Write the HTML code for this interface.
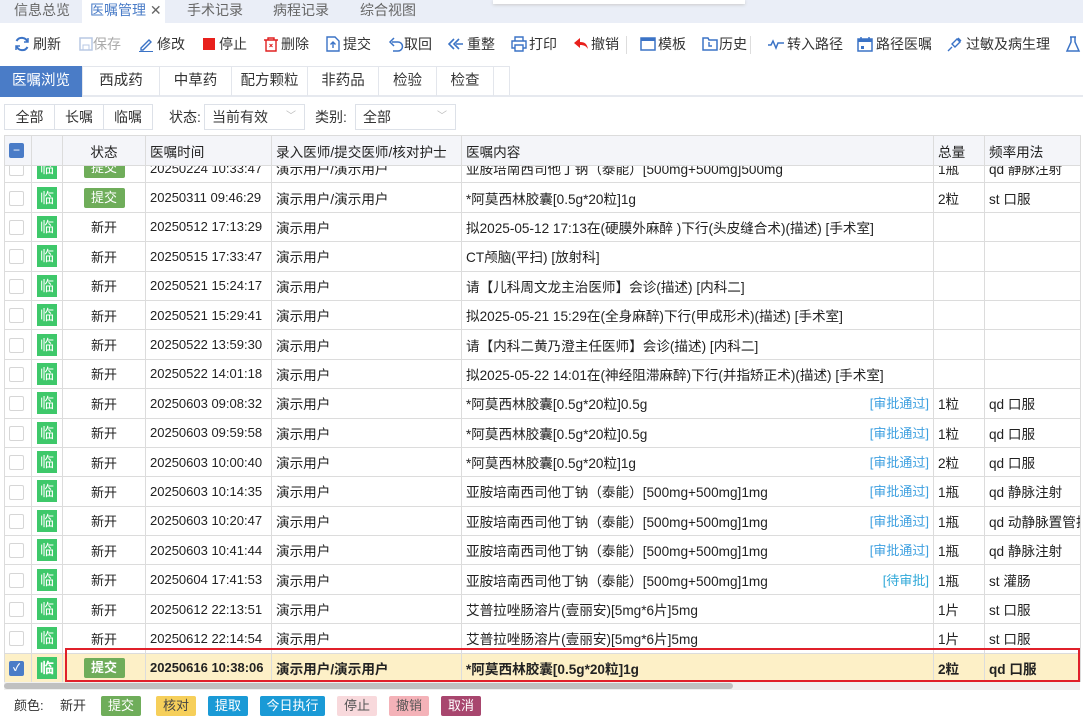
<!DOCTYPE html>
<html><head><meta charset="utf-8">
<style>
*{margin:0;padding:0;box-sizing:border-box}
body{width:1083px;height:718px;overflow:hidden;background:#fff;font-family:"Liberation Sans","Noto Sans CJK SC",sans-serif;color:#222;position:relative}
.a{position:absolute;white-space:nowrap}
.tabbar{left:0;top:0;width:1083px;height:23px;background:#eaeef7}
.tt{top:0;height:23px;line-height:20px;font-size:14px;color:#666}
.tb{top:34px;font-size:14px;line-height:20px;color:#333}
.ic{top:36px;width:16px;height:16px}
.sub{top:66px;height:30px;line-height:30px;font-size:14.5px;text-align:center;border-right:1px solid #e3e6ec;color:#333}
.fb{top:104px;height:26px;line-height:24px;font-size:14px;border:1px solid #dde1e8;text-align:center;color:#333}
table{border-collapse:collapse;table-layout:fixed;font-size:13px}
td{height:29.4px;border:1px solid #dcdcdc;padding:0 4px;white-space:nowrap;overflow:hidden}
td:nth-child(6),td:nth-child(5),td:nth-child(8),td:nth-child(7){font-size:13.6px}
.cb{display:inline-block;width:15px;height:15px;border:1px solid #d6d6d6;border-radius:2px;background:#fff;vertical-align:middle}
.lin{display:inline-block;width:20px;height:22px;background:#3ec86a;color:#fff;text-align:center;line-height:22px;font-size:14px;vertical-align:middle}
.tj{display:inline-block;width:41px;height:20px;background:#6fad5a;color:#fff;line-height:20px;font-size:13px;border-radius:2px}
.c{text-align:center}
.ap{float:right;color:#3ea0e0;font-size:13px}
.hdr td{background:#f4f5f9;height:30px;font-size:13.6px}
.lg{top:696px;height:20px;line-height:20px;font-size:13px;text-align:center;color:#fff;border-radius:2px}
</style></head><body>
<div class="a tabbar"></div>
<div class="a" style="left:82px;top:0;width:83px;height:23px;background:#fff"></div>
<div class="a tt" style="left:14px">信息总览</div>
<div class="a tt" style="left:90px;color:#4a7cc7">医嘱管理 <span style="color:#666">✕</span></div>
<div class="a tt" style="left:187px">手术记录</div>
<div class="a tt" style="left:273px">病程记录</div>
<div class="a tt" style="left:360px">综合视图</div>
<div class="a" style="left:493px;top:0;width:252px;height:4px;background:#fff;box-shadow:0 1px 3px #ccc"></div>

<svg class="a ic" style="left:14px" viewBox="0 0 16 16"><path d="M13.5 6A6 6 0 0 0 2.5 5M2.5 10a6 6 0 0 0 11 1" fill="none" stroke="#3b73c6" stroke-width="2"/><path d="M14 2v4h-4M2 14v-4h4" fill="none" stroke="#3b73c6" stroke-width="1.5"/></svg>
<div class="a tb" style="left:33px">刷新</div>
<svg class="a ic" style="left:78px" viewBox="0 0 16 16"><rect x="2" y="2" width="12" height="12" fill="none" stroke="#b8c8e4" stroke-width="1.5"/><rect x="5" y="9" width="6" height="5" fill="none" stroke="#b8c8e4"/></svg>
<div class="a tb" style="left:93px;color:#aaa">保存</div>
<svg class="a ic" style="left:138px" viewBox="0 0 16 16"><path d="M3 12l8-8 2 2-8 8H3z" fill="none" stroke="#3b73c6" stroke-width="1.4"/><path d="M1 15.5h14" stroke="#3b73c6"/></svg>
<div class="a tb" style="left:157px">修改</div>
<div class="a" style="left:203px;top:38px;width:12px;height:12px;background:#e8201c"></div>
<div class="a tb" style="left:219px">停止</div>
<svg class="a ic" style="left:263px" viewBox="0 0 16 16"><path d="M1 4h14M5 4V2h6v2M3 4v11h10V4" fill="none" stroke="#e02020" stroke-width="1.4"/><path d="M6.5 8l3 3M9.5 8l-3 3" stroke="#e02020"/></svg>
<div class="a tb" style="left:281px">删除</div>
<svg class="a ic" style="left:325px" viewBox="0 0 16 16"><path d="M2 1h8l4 4v10H2z" fill="none" stroke="#3b73c6" stroke-width="1.4"/><path d="M8 12V6M5.5 8.5L8 6l2.5 2.5" fill="none" stroke="#3b73c6" stroke-width="1.4"/></svg>
<div class="a tb" style="left:343px">提交</div>
<svg class="a ic" style="left:388px" viewBox="0 0 16 16"><path d="M4 6h6a4.5 4.5 0 0 1 0 9H5M6 2L2 6l4 4" fill="none" stroke="#3b73c6" stroke-width="1.5"/></svg>
<div class="a tb" style="left:404px">取回</div>
<svg class="a ic" style="left:448px" viewBox="0 0 16 16"><path d="M6 3L1 8l5 5M11 3L6 8l5 5M8 8h7" fill="none" stroke="#3b73c6" stroke-width="1.6"/></svg>
<div class="a tb" style="left:467px">重整</div>
<svg class="a ic" style="left:511px" viewBox="0 0 16 16"><path d="M4 5V1h8v4M4 12H1V5h14v7h-3M4 9h8v6H4z" fill="none" stroke="#3b73c6" stroke-width="1.4"/></svg>
<div class="a tb" style="left:529px">打印</div>
<svg class="a ic" style="left:573px" viewBox="0 0 16 16"><path d="M7 2L1 7l6 5V9c4 0 6 1 8 4-1-5-3-7-8-7z" fill="#e8201c"/></svg>
<div class="a tb" style="left:591px">撤销</div>
<div class="a" style="left:626px;top:36px;width:1px;height:18px;background:#ddd"></div>
<svg class="a ic" style="left:640px" viewBox="0 0 16 16"><rect x="1" y="2" width="14" height="12" fill="none" stroke="#3b73c6" stroke-width="1.5"/><rect x="1" y="2" width="14" height="3" fill="#3b73c6"/></svg>
<div class="a tb" style="left:658px">模板</div>
<svg class="a ic" style="left:702px" viewBox="0 0 16 16"><path d="M1 2h5l1 2h8v10H1z" fill="none" stroke="#3b73c6" stroke-width="1.5"/><path d="M7 6v4h3" fill="none" stroke="#3b73c6" stroke-width="1.4"/></svg>
<div class="a tb" style="left:719px">历史</div>
<div class="a" style="left:750px;top:36px;width:1px;height:18px;background:#ddd"></div>
<svg class="a ic" style="left:768px" viewBox="0 0 16 16"><path d="M0 9h3l2-4 3 7 2-5h6" fill="none" stroke="#3b73c6" stroke-width="1.5"/></svg>
<div class="a tb" style="left:787px">转入路径</div>
<svg class="a ic" style="left:857px" viewBox="0 0 16 16"><rect x="1" y="3" width="14" height="12" fill="none" stroke="#3b73c6" stroke-width="1.5"/><rect x="1" y="3" width="14" height="3" fill="#3b73c6"/><path d="M4 1v3M12 1v3" stroke="#3b73c6" stroke-width="1.5"/><rect x="4" y="10" width="3" height="3" fill="#3b73c6"/></svg>
<div class="a tb" style="left:876px">路径医嘱</div>
<svg class="a ic" style="left:947px" viewBox="0 0 16 16"><path d="M5 8l5-5 3 3-5 5zM3 13l2-2M11 2l3 3M1 15l3-3" fill="none" stroke="#3b73c6" stroke-width="1.4"/></svg>
<div class="a tb" style="left:966px">过敏及病生理</div>
<svg class="a ic" style="left:1065px" viewBox="0 0 16 16"><path d="M5 1h6M6 1v5L2 15h12L10 6V1" fill="none" stroke="#3b73c6" stroke-width="1.5"/></svg>

<div class="a" style="left:0;top:66px;width:510px;height:30px;border:1px solid #e3e6ec;border-bottom:none"></div>
<div class="a" style="left:0;top:95px;width:1083px;height:2px;background:#e6e9ef"></div>
<div class="a sub" style="left:0;width:83px;background:#4a7cc7;color:#fff;height:31px">医嘱浏览</div>
<div class="a sub" style="left:83px;width:77px">西成药</div>
<div class="a sub" style="left:160px;width:72px">中草药</div>
<div class="a sub" style="left:232px;width:76px">配方颗粒</div>
<div class="a sub" style="left:308px;width:71px">非药品</div>
<div class="a sub" style="left:379px;width:58px">检验</div>
<div class="a sub" style="left:437px;width:57px">检查</div>

<div class="a fb" style="left:4px;width:51px">全部</div>
<div class="a fb" style="left:54px;width:50px">长嘱</div>
<div class="a fb" style="left:103px;width:50px">临嘱</div>
<div class="a" style="left:169px;top:107px;font-size:14px;color:#333">状态:</div>
<div class="a fb" style="left:204px;width:101px;text-align:left;padding-left:7px">当前有效<span style="position:absolute;right:8px;color:#bbb;font-size:10px">﹀</span></div>
<div class="a" style="left:315px;top:107px;font-size:14px;color:#333">类别:</div>
<div class="a fb" style="left:355px;width:101px;text-align:left;padding-left:7px">全部<span style="position:absolute;right:8px;color:#bbb;font-size:10px">﹀</span></div>

<div class="a" style="left:4px;top:135px;width:1079px;height:547px;overflow:hidden">
<table style="position:absolute;left:0;top:18px;width:1076px">
<colgroup><col style="width:27px"><col style="width:31px"><col style="width:83px"><col style="width:126px"><col style="width:190px"><col style="width:472px"><col style="width:51px"><col style="width:96px"></colgroup>
<tr><td><span class="cb"></span></td><td class="c"><span class="lin">临</span></td><td class="c"><span class="tj">提交</span></td><td>20250224 10:33:47</td><td>演示用户/演示用户</td><td>亚胺培南西司他丁钠（泰能）[500mg+500mg]500mg</td><td>1瓶</td><td>qd 静脉注射</td></tr>
<tr><td><span class="cb"></span></td><td class="c"><span class="lin">临</span></td><td class="c"><span class="tj">提交</span></td><td>20250311 09:46:29</td><td>演示用户/演示用户</td><td>*阿莫西林胶囊[0.5g*20粒]1g</td><td>2粒</td><td>st 口服</td></tr>
<tr><td><span class="cb"></span></td><td class="c"><span class="lin">临</span></td><td class="c">新开</td><td>20250512 17:13:29</td><td>演示用户</td><td>拟2025-05-12 17:13在(硬膜外麻醉 )下行(头皮缝合术)(描述) [手术室]</td><td></td><td></td></tr>
<tr><td><span class="cb"></span></td><td class="c"><span class="lin">临</span></td><td class="c">新开</td><td>20250515 17:33:47</td><td>演示用户</td><td>CT颅脑(平扫) [放射科]</td><td></td><td></td></tr>
<tr><td><span class="cb"></span></td><td class="c"><span class="lin">临</span></td><td class="c">新开</td><td>20250521 15:24:17</td><td>演示用户</td><td>请【儿科周文龙主治医师】会诊(描述) [内科二]</td><td></td><td></td></tr>
<tr><td><span class="cb"></span></td><td class="c"><span class="lin">临</span></td><td class="c">新开</td><td>20250521 15:29:41</td><td>演示用户</td><td>拟2025-05-21 15:29在(全身麻醉)下行(甲成形术)(描述) [手术室]</td><td></td><td></td></tr>
<tr><td><span class="cb"></span></td><td class="c"><span class="lin">临</span></td><td class="c">新开</td><td>20250522 13:59:30</td><td>演示用户</td><td>请【内科二黄乃澄主任医师】会诊(描述) [内科二]</td><td></td><td></td></tr>
<tr><td><span class="cb"></span></td><td class="c"><span class="lin">临</span></td><td class="c">新开</td><td>20250522 14:01:18</td><td>演示用户</td><td>拟2025-05-22 14:01在(神经阻滞麻醉)下行(并指矫正术)(描述) [手术室]</td><td></td><td></td></tr>
<tr><td><span class="cb"></span></td><td class="c"><span class="lin">临</span></td><td class="c">新开</td><td>20250603 09:08:32</td><td>演示用户</td><td>*阿莫西林胶囊[0.5g*20粒]0.5g<span class="ap">[审批通过]</span></td><td>1粒</td><td>qd 口服</td></tr>
<tr><td><span class="cb"></span></td><td class="c"><span class="lin">临</span></td><td class="c">新开</td><td>20250603 09:59:58</td><td>演示用户</td><td>*阿莫西林胶囊[0.5g*20粒]0.5g<span class="ap">[审批通过]</span></td><td>1粒</td><td>qd 口服</td></tr>
<tr><td><span class="cb"></span></td><td class="c"><span class="lin">临</span></td><td class="c">新开</td><td>20250603 10:00:40</td><td>演示用户</td><td>*阿莫西林胶囊[0.5g*20粒]1g<span class="ap">[审批通过]</span></td><td>2粒</td><td>qd 口服</td></tr>
<tr><td><span class="cb"></span></td><td class="c"><span class="lin">临</span></td><td class="c">新开</td><td>20250603 10:14:35</td><td>演示用户</td><td>亚胺培南西司他丁钠（泰能）[500mg+500mg]1mg<span class="ap">[审批通过]</span></td><td>1瓶</td><td>qd 静脉注射</td></tr>
<tr><td><span class="cb"></span></td><td class="c"><span class="lin">临</span></td><td class="c">新开</td><td>20250603 10:20:47</td><td>演示用户</td><td>亚胺培南西司他丁钠（泰能）[500mg+500mg]1mg<span class="ap">[审批通过]</span></td><td>1瓶</td><td>qd 动静脉置管护</td></tr>
<tr><td><span class="cb"></span></td><td class="c"><span class="lin">临</span></td><td class="c">新开</td><td>20250603 10:41:44</td><td>演示用户</td><td>亚胺培南西司他丁钠（泰能）[500mg+500mg]1mg<span class="ap">[审批通过]</span></td><td>1瓶</td><td>qd 静脉注射</td></tr>
<tr><td><span class="cb"></span></td><td class="c"><span class="lin">临</span></td><td class="c">新开</td><td>20250604 17:41:53</td><td>演示用户</td><td>亚胺培南西司他丁钠（泰能）[500mg+500mg]1mg<span class="ap" style="color:#2fa8d8">[待审批]</span></td><td>1瓶</td><td>st 灌肠</td></tr>
<tr><td><span class="cb"></span></td><td class="c"><span class="lin">临</span></td><td class="c">新开</td><td>20250612 22:13:51</td><td>演示用户</td><td>艾普拉唑肠溶片(壹丽安)[5mg*6片]5mg</td><td>1片</td><td>st 口服</td></tr>
<tr><td><span class="cb"></span></td><td class="c"><span class="lin">临</span></td><td class="c">新开</td><td>20250612 22:14:54</td><td>演示用户</td><td>艾普拉唑肠溶片(壹丽安)[5mg*6片]5mg</td><td>1片</td><td>st 口服</td></tr>
<tr style="background:#fdf0c7;font-weight:bold"><td><span class="cb" style="background:#4a7cc7;border-color:#4a7cc7;color:#fff;font-size:10px;line-height:13px;text-align:center">✓</span></td><td class="c"><span class="lin">临</span></td><td class="c"><span class="tj" style="font-weight:bold">提交</span></td><td>20250616 10:38:06</td><td>演示用户/演示用户</td><td>*阿莫西林胶囊[0.5g*20粒]1g</td><td>2粒</td><td>qd 口服</td></tr>
</table>
<table class="hdr" style="position:absolute;left:0;top:0;width:1076px">
<colgroup><col style="width:27px"><col style="width:31px"><col style="width:83px"><col style="width:126px"><col style="width:190px"><col style="width:472px"><col style="width:51px"><col style="width:96px"></colgroup>
<tr><td><span class="cb" style="background:#4a7cc7;border-color:#4a7cc7;color:#fff;font-size:12px;line-height:12px;text-align:center">−</span></td><td></td><td class="c">状态</td><td>医嘱时间</td><td>录入医师/提交医师/核对护士</td><td>医嘱内容</td><td>总量</td><td>频率用法</td></tr>
</table>
<div class="a" style="left:61px;top:513px;width:1015px;height:34px;border:2px solid #e0202a"></div>
</div>
<div class="a" style="left:4px;top:682px;width:1076px;height:8px;background:#f0f0f0"></div>
<div class="a" style="left:4px;top:683px;width:729px;height:6px;background:#c0c0c0;border-radius:3px"></div>

<div class="a" style="left:14px;top:696px;font-size:13px;line-height:20px;color:#333">颜色:</div>
<div class="a" style="left:60px;top:696px;font-size:13px;line-height:20px;color:#333">新开</div>
<div class="a lg" style="left:101px;width:40px;background:#6fad5a">提交</div>
<div class="a lg" style="left:156px;width:40px;background:#f6cf5a;color:#444">核对</div>
<div class="a lg" style="left:208px;width:40px;background:#1a9ad6">提取</div>
<div class="a lg" style="left:260px;width:65px;background:#1a9ad6">今日执行</div>
<div class="a lg" style="left:337px;width:40px;background:#f8d9dc;color:#555">停止</div>
<div class="a lg" style="left:389px;width:40px;background:#f4b2b8;color:#555">撤销</div>
<div class="a lg" style="left:441px;width:40px;background:#a8466e">取消</div>
</body></html>
